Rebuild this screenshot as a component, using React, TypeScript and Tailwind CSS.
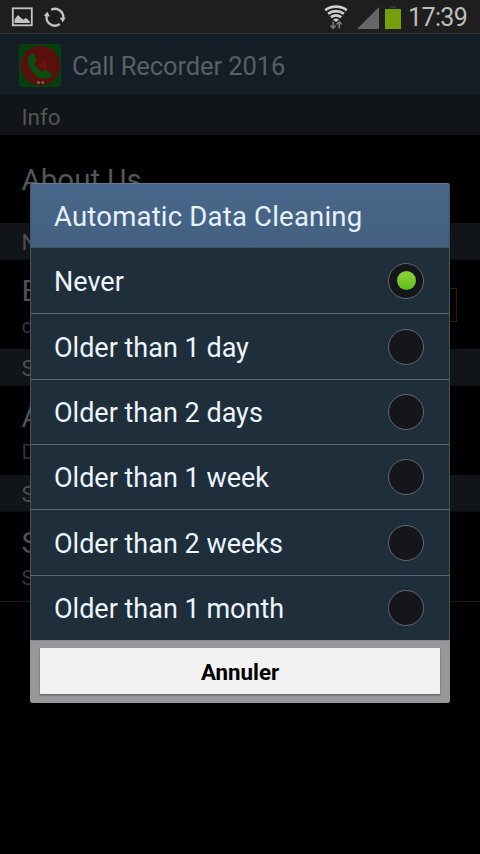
type OptionProps = {
    label: string;
    checked?: boolean;
    size: string;
};

type SettingProps = {
    title: string;
    summary: string;
    checkbox?: boolean;
};

const options: OptionProps[] = [
    { label: "Never", checked: true, size: "h-[66px]" },
    { label: "Older than 1 day", size: "h-[66px]" },
    { label: "Older than 2 days", size: "h-[65px]" },
    { label: "Older than 1 week", size: "h-[65px]" },
    { label: "Older than 2 weeks", size: "h-[66px]" },
    { label: "Older than 1 month", size: "h-[64px]" },
];

function StatusBar() {
    return (
        <div className="flex h-[34px] items-center border-b border-[#2b3032] bg-[#1e1e1e] pr-[12px] pl-[11px]">
            <svg width="22" height="20" viewBox="0 0 22 20" className="mt-px">
                <rect x="1.8" y="1.3" width="19" height="17" fill="none" stroke="#c4c4c4" strokeWidth="1.8" />
                <path d="M3.5 16V12.5L6 9L7.5 8.2L10 11L12.5 12.8L14.5 11L16.5 12L19 15V16Z" fill="#c4c4c4" />
            </svg>
            <svg width="22" height="22" viewBox="0 0 22 22" fill="none" stroke="#c4c4c4" strokeWidth="2.3" className="mt-px ml-[11px]">
                <path d="M7.2 3.8A8.3 8.3 0 0 1 19.2 12.5" />
                <path d="M15.8 18A8.3 8.3 0 0 1 2.8 9.5" />
                <path d="M-0.2 9.8L3.4 5.8L6 10.4Z M15.8 11.8H21.8L18.6 16.2Z" fill="#c4c4c4" stroke="none" />
            </svg>

            <div className="ml-auto flex items-center pt-[2px]">
                <svg width="24" height="26" viewBox="0 0 24 26" fill="none" stroke="#cfcfcf" strokeWidth="2.7">
                    <path d="M1.2 5.2C7.2 0.5 16.8 0.5 22.8 5.2" />
                    <path d="M4 8.8C8.8 5.1 15.2 5.1 20 8.8" />
                    <path d="M6.8 12.2C10 9.9 14 9.9 17.2 12.2" />
                    <path d="M9 14.4Q12 12.6 15 14.4L12 17Z" fill="#cfcfcf" stroke="none" />
                    <path d="M9.2 16.5V23M6.6 20.5L9.2 23.3L11.8 20.5M15.2 23.5V17M12.6 19.5L15.2 16.7L17.8 19.5" stroke="#777" strokeWidth="1.7" />
                </svg>
                <svg width="22" height="22" viewBox="0 0 22 22" className="ml-[9px]">
                    <path d="M0 22L22 0V22Z" fill="#676767" />
                </svg>
                <svg width="16" height="23" viewBox="0 0 16 23" className="ml-[6px]">
                    <path d="M5 0H11V2.5H5Z" fill="#343434" />
                    <path d="M0 3H16V23H0Z" fill="#75a00b" />
                </svg>
                <span className="ml-[7px] w-[60px] text-[25px] leading-none tracking-[-0.6px] whitespace-nowrap text-[#bdbdbd]">17:39</span>
            </div>
        </div>
    );
}

function AppIcon() {
    return (
        <svg width="42" height="43" viewBox="0 0 42 43" className="mt-[2px]">
            <rect width="42" height="43" rx="4" fill="#07400c" />
            <circle cx="21.5" cy="21.5" r="19.8" fill="#58100f" />
            <path
                d="M9.5 12.5C7.5 19 10.5 25 15 30C20 35 27 36 31 33.5Q33.5 32 33 30L26.5 25.5Q25 25 23.5 28C19.5 26 16.5 22.5 15.2 18.5L17.8 16.5L15.5 10Q13 8.5 9.5 12.5Z"
                fill="#09500e"
            />
            <path d="M21 21L24.5 15L29 20L27 24L22 23Z" fill="#70180f" opacity=".6" />
            <path d="M18 38.5H21M22.5 38.5H25" stroke="#79716f" strokeWidth="2" />
        </svg>
    );
}

function SectionHeader({ title }: { title: string }) {
    return <h2 className="h-[37px] border-b border-[#0b0d0f] bg-[#121517] pl-[21.5px] text-[22.5px] leading-[38px] text-[#4d4d4d]">{title}</h2>;
}

function Setting({ title, summary, checkbox }: SettingProps) {
    return (
        <div className="flex h-[89px] items-center justify-between pr-[23px] pl-[21.5px]">
            <div className="pt-[3px]">
                <p className="pt-[4px] text-[29.5px] leading-[34px] text-[#505050]">{title}</p>
                <p className="pt-[2px] text-[21px] leading-[32px] text-[#343434]">{summary}</p>
            </div>
            {checkbox && <span className="h-[34px] w-[34px] border border-[#25221d]" />}
        </div>
    );
}

function Option({ label, checked, size }: OptionProps) {
    return (
        <li className={`${size} flex items-center justify-between border-b border-[#566a78] pr-[25px] pl-[23px] last:border-b-0`}>
            <span className="pt-[3px] text-[27px] leading-none text-[#edf5fa]">{label}</span>
            <span className="flex h-[36px] w-[36px] items-center justify-center rounded-full border-[1.5px] border-[#62696c] bg-[#14161b]">
                {checked && <span className="h-[19px] w-[19px] rounded-full bg-linear-to-b from-[#8bd236] to-[#65bd18]" />}
            </span>
        </li>
    );
}

function CleaningDialog() {
    return (
        <div className="absolute top-[183px] left-[30px] h-[520px] w-[420px] overflow-hidden rounded-[3px] bg-[#1f2e3b]">
            <div className="border-x border-[#48535c]">
                <h1 className="h-[65px] border-t border-b border-t-[#697b8b] border-b-[#3b5167] bg-linear-to-b from-[#48678a] to-[#436080] pl-[23px] text-[27.5px] leading-[66px] tracking-[0.2px] text-[#e7f1fb]">
                    Automatic Data Cleaning
                </h1>
                <ul>
                    {options.map((option) => (
                        <Option key={option.label} {...option} />
                    ))}
                </ul>
            </div>
            <div className="h-[63px] border-t border-[#85888a] bg-[#979899] px-[10px] pt-[7px]">
                <button className="h-[46px] w-full bg-[#f2f2f2] pt-[3px] text-[22.3px] font-bold text-black shadow-[0_1px_2px_#555]">Annuler</button>
            </div>
        </div>
    );
}

export default function App() {
    return (
        <main className="relative h-[854px] w-[480px] overflow-hidden bg-black font-[Roboto,sans-serif]">
            <StatusBar />
            <header className="flex h-[62px] items-center border-b border-[#121518] bg-[#141e27] pl-[19px]">
                <AppIcon />
                <span className="ml-[11px] pt-[4px] text-[25.5px] leading-none tracking-[-0.1px] text-[#595f65]">Call Recorder 2016</span>
            </header>
            <h2 className="h-[39px] bg-[#121517] pl-[21.5px] text-[22.5px] leading-[42px] text-[#555]">Info</h2>
            <p className="h-[88px] pl-[21.5px] text-[29.5px] leading-[91px] text-[#555]">About Us</p>
            {/* only the first letters stick out from under the dialog */}
            <SectionHeader title="N" />
            <Setting title="E" summary="d" checkbox />
            <SectionHeader title="S" />
            <Setting title="A" summary="D" />
            <SectionHeader title="S" />
            <Setting title="S" summary="S" />
            <div className="h-px bg-[#1d1d1d]" />
            <CleaningDialog />
        </main>
    );
}
